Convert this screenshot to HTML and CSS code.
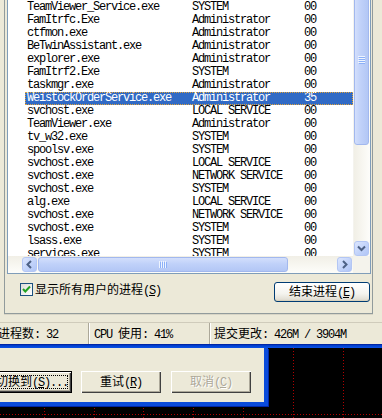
FILE: index.html
```html
<!DOCTYPE html>
<html lang="zh-CN">
<head>
<meta charset="utf-8">
<title>任务管理器</title>
<link rel="stylesheet" href="styles.css">
</head>
<body>
<div class="tm">
  <div class="page">
    <div class="list">
      <div class="rows">
        <div class="row"><span class="c1">TeamViewer_Service.exe</span><span class="c2">SYSTEM</span><span class="c3">00</span></div>
        <div class="row"><span class="c1">FamItrfc.Exe</span><span class="c2">Administrator</span><span class="c3">00</span></div>
        <div class="row"><span class="c1">ctfmon.exe</span><span class="c2">Administrator</span><span class="c3">00</span></div>
        <div class="row"><span class="c1">BeTwinAssistant.exe</span><span class="c2">Administrator</span><span class="c3">00</span></div>
        <div class="row"><span class="c1">explorer.exe</span><span class="c2">Administrator</span><span class="c3">00</span></div>
        <div class="row"><span class="c1">FamItrf2.Exe</span><span class="c2">SYSTEM</span><span class="c3">00</span></div>
        <div class="row"><span class="c1">taskmgr.exe</span><span class="c2">Administrator</span><span class="c3">00</span></div>
        <div class="row sel"><span class="c1">WeistockOrderService.exe</span><span class="c2">Administrator</span><span class="c3">35</span></div>
        <div class="row"><span class="c1">svchost.exe</span><span class="c2">LOCAL SERVICE</span><span class="c3">00</span></div>
        <div class="row"><span class="c1">TeamViewer.exe</span><span class="c2">Administrator</span><span class="c3">00</span></div>
        <div class="row"><span class="c1">tv_w32.exe</span><span class="c2">SYSTEM</span><span class="c3">00</span></div>
        <div class="row"><span class="c1">spoolsv.exe</span><span class="c2">SYSTEM</span><span class="c3">00</span></div>
        <div class="row"><span class="c1">svchost.exe</span><span class="c2">LOCAL SERVICE</span><span class="c3">00</span></div>
        <div class="row"><span class="c1">svchost.exe</span><span class="c2">NETWORK SERVICE</span><span class="c3">00</span></div>
        <div class="row"><span class="c1">svchost.exe</span><span class="c2">SYSTEM</span><span class="c3">00</span></div>
        <div class="row"><span class="c1">alg.exe</span><span class="c2">LOCAL SERVICE</span><span class="c3">00</span></div>
        <div class="row"><span class="c1">svchost.exe</span><span class="c2">NETWORK SERVICE</span><span class="c3">00</span></div>
        <div class="row"><span class="c1">svchost.exe</span><span class="c2">SYSTEM</span><span class="c3">00</span></div>
        <div class="row"><span class="c1">lsass.exe</span><span class="c2">SYSTEM</span><span class="c3">00</span></div>
        <div class="row"><span class="c1">services.exe</span><span class="c2">SYSTEM</span><span class="c3">00</span></div>
      </div>
      <div class="vsb">
        <div class="thumb vthumb">
          <svg width="7" height="8" viewBox="0 0 7 8"><path d="M0 0.5H7M0 2.5H7M0 4.5H7M0 6.5H7" stroke="#EEF4FE"/><path d="M1 1.5H8M1 3.5H8M1 5.5H8M1 7.5H8" stroke="#8CB0F8"/></svg>
        </div>
        <div class="vtrack"></div>
        <div class="sbtn vbtn">
          <svg width="13" height="13" viewBox="0 0 13 13"><path d="M3 4.5L6.5 8L10 4.5" fill="none" stroke="#4D6185" stroke-width="2"/></svg>
        </div>
      </div>
      <div class="hsb">
        <div class="hpad"></div>
        <div class="sbtn hbtn">
          <svg width="13" height="13" viewBox="0 0 13 13"><path d="M8 3L4.5 6.5L8 10" fill="none" stroke="#4D6185" stroke-width="2"/></svg>
        </div>
        <div class="thumb hthumb">
          <svg width="8" height="7" viewBox="0 0 8 7"><path d="M0.5 0V7M2.5 0V7M4.5 0V7M6.5 0V7" stroke="#EEF4FE"/><path d="M1.5 1V8M3.5 1V8M5.5 1V8M7.5 1V8" stroke="#8CB0F8"/></svg>
        </div>
        <div class="htrack"></div>
        <div class="sbtn hbtn rbtn">
          <svg width="13" height="13" viewBox="0 0 13 13"><path d="M5 3L8.5 6.5L5 10" fill="none" stroke="#4D6185" stroke-width="2"/></svg>
        </div>
      </div>
      <div class="corner"></div>
    </div>
    <div class="actions">
      <div class="chk">
        <span class="box"><svg width="11" height="11" viewBox="0 0 11 11"><path d="M2 5L4.3 7.5L9 2.5" fill="none" stroke="#21A121" stroke-width="2"/></svg></span>
        <span class="lbl">显示所有用户的进程<span class="m">(<u>S</u>)</span></span>
      </div>
      <button class="xpbtn" type="button"><span>结束进程<span class="m">(<u>E</u>)</span></span></button>
    </div>
  </div>
  <div class="status">
    <div class="sbar">
      <div class="pane p1"><span>进程数<span class="m">: 32</span></span></div>
      <div class="pane p2"><span><span class="m">CPU </span>使用<span class="m">: 41%</span></span></div>
      <div class="pane p3"><span>提交更改<span class="m">: 426M / 3904M</span></span></div>
    </div>
  </div>
</div>
<div class="desk">
  <div class="band"></div>
  <div class="area">
    <svg class="grid" width="382" height="70" viewBox="0 0 382 70">
      <g stroke="#B00000" stroke-width="1" stroke-dasharray="1 2" fill="none">
        <path d="M44.5 0V70M94.5 0V70M143.5 0V70M193.5 0V70M243.5 0V70M293.5 0V70M343.5 0V70"/>
        <path d="M0 66.5H382"/>
      </g>
    </svg>
    <div class="dlg">
      <button class="cbtn def" type="button"><span>切换到<span class="m">(<u>S</u>)...</span></span></button>
      <button class="cbtn gap2" type="button"><span>重试<span class="m">(<u>R</u>)</span></span></button>
      <button class="cbtn dis" type="button"><span>取消<span class="m">(<u>C</u>)</span></span></button>
    </div>
  </div>
</div>
</body>
</html>
```

FILE: styles.css
```css
* { box-sizing: border-box; margin: 0; padding: 0; }
html, body { width: 382px; height: 418px; overflow: hidden; }
body {
  background: #ECE9D8;
  font-family: "Noto Sans CJK SC", "Liberation Sans", sans-serif;
  font-size: 12px;
  line-height: 14px;
  color: #000;
}
.m {
  font-family: "Liberation Mono", "Noto Sans CJK SC", monospace;
  letter-spacing: -1.2px;
}
u { text-underline-offset: 1px; }

/* task manager */
.tm { height: 344px; display: flex; flex-direction: column; }
.page {
  margin-left: 4px;
  width: 369px;
  height: 314px;
  border: 1px solid #919B9C;
  border-top: none;
  box-shadow: 0 1px 0 #D8D5C6;
  display: flex;
  flex-direction: column;
  flex: none;
}
.list {
  margin-left: 2px;
  width: 364px;
  height: 274px;
  flex: none;
  border: 1px solid #7F9DB9;
  border-top: none;
  background: #fff;
  display: grid;
  grid-template-columns: 345px 17px;
  grid-template-rows: 256px 17px;
}
.rows {
  background: #fff;
  padding-top: 1px;
  overflow: hidden;
  font-family: "Liberation Mono", monospace;
  font-size: 12px;
  letter-spacing: -1.2px;
}
.row {
  display: flex;
  height: 13px;
  line-height: 13px;
  margin-left: 17px;
  padding-left: 2px;
  white-space: nowrap;
}
.c1 { width: 165px; flex: none; }
.c2 { width: 112px; flex: none; }
.row.sel {
  background: #316AC5;
  color: #fff;
  outline: 1px dotted #E0A23A;
  outline-offset: -1px;
}

/* scrollbars */
.vsb {
  display: flex;
  flex-direction: column;
  overflow: hidden;
  background: linear-gradient(to right, #F1EFE6, #FDFDFA);
  border-left: 1px solid #F4F3EE;
}
.thumb {
  border: 1px solid #A2B8EE;
  border-radius: 3px;
  display: flex;
  align-items: center;
  justify-content: center;
  flex: none;
}
.vthumb {
  height: 170px;
  margin: -25px 1px 0 0;
  background: linear-gradient(to right, #D3DFFC, #C0D1F9 45%, #B3C7F5);
}
.vtrack { flex: 1; }
.sbtn {
  flex: none;
  border: 1px solid #B3C6F4;
  border-radius: 3px;
  background: linear-gradient(135deg, #DCE6FE, #C2D3FA 55%, #B0C5F6);
  display: flex;
  align-items: center;
  justify-content: center;
}
.vbtn { height: 15px; margin: 0 1px 0 0; }
.hsb {
  display: flex;
  padding: 1px 0;
  background: linear-gradient(#F1EFE6, #FDFDFA);
}
.hpad { width: 14px; flex: none; }
.hbtn { width: 15px; }
.rbtn { margin-right: 1px; }
.hthumb {
  width: 250px;
  margin-left: 1px;
  background: linear-gradient(#D3DFFC, #C0D1F9 45%, #B3C7F5);
}
.htrack { flex: 1; }
.corner { background: #F4F3EC; }

/* actions */
.actions {
  display: flex;
  align-items: flex-start;
  justify-content: space-between;
  margin-top: 8px;
  padding: 0 2px 0 15px;
}
.chk {
  display: flex;
  align-items: center;
  height: 13px;
  margin-top: 1px;
}
.box {
  width: 13px;
  height: 13px;
  border: 1px solid #1C5180;
  background: linear-gradient(135deg, #DCDCD7, #FFFFFF);
  display: flex;
  align-items: center;
  justify-content: center;
  margin-right: 2px;
}
.lbl { white-space: nowrap; line-height: 13px; }
.xpbtn {
  width: 96px;
  height: 20px;
  border: 1px solid #003C74;
  border-radius: 3px;
  background: linear-gradient(#FFFFFF, #F4F3EE 60%, #E3E0D6 90%, #D6D0C5);
  box-shadow: inset 0 -1px 0 #D8D2BD;
  font-family: inherit;
  font-size: 12px;
  line-height: 14px;
  color: #000;
  display: flex;
  align-items: center;
  justify-content: center;
  white-space: nowrap;
}

/* status bar */
.status { height: 30px; padding-top: 8px; flex: none; }
.sbar {
  display: flex;
  height: 22px;
  border-top: 1px solid #CFCBBB;
}
.pane {
  display: flex;
  align-items: center;
  white-space: nowrap;
  border-right: 1px solid #ACA899;
}
.p1 { width: 91px; padding-left: 0; margin-left: -2px; }
.p2 { width: 121px; padding-left: 5px; box-shadow: inset 1px 0 #fff; }
.p3 { flex: 1; padding-left: 4px; border-right: none; box-shadow: inset 1px 0 #fff; }

/* desktop + dialog */
.desk { height: 74px; display: flex; flex-direction: column; }
.band {
  height: 4px;
  flex: none;
  background: linear-gradient(#001A94, #0040D0 40%, #0A52E4);
}
.area {
  position: relative;
  flex: 1;
  background: #000;
  overflow: hidden;
}
.grid { display: block; }
.dlg {
  position: absolute;
  left: -20px;
  top: 0;
  width: 288px;
  height: 58px;
  background: #ECE9D8;
  border-right: 4px solid #0A4BDB;
  border-bottom: 4px solid #0A4BDB;
  box-shadow: 1px 1px 0 #0026A8;
  display: flex;
  align-items: flex-start;
  padding: 23px 0 0 12px;
}
.cbtn {
  width: 80px;
  height: 22px;
  flex: none;
  border: none;
  background: #ECE9D8;
  box-shadow: inset 1px 1px 0 #fff, inset -1px -1px 0 #404040, inset -2px -2px 0 #ACA899;
  font-family: inherit;
  font-size: 12px;
  line-height: 14px;
  color: #000;
  display: flex;
  align-items: center;
  justify-content: center;
  white-space: nowrap;
}
.def {
  border: 1px solid #000;
  outline: 1px dotted #000;
  outline-offset: -5px;
  margin-right: 9px;
}
.gap2 { margin-right: 10px; }
.dis { color: #ACA899; text-shadow: 1px 1px 0 #fff; }
```
